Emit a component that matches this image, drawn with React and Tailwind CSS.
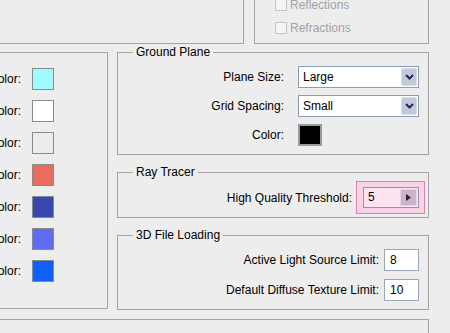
const swatches = ["#a0fbff", "#ffffff", "#ececec", "#e96c60", "#3b47b0", "#5e6cf5", "#0f5ff9"];

function Chevron() {
  return (
    <svg width="9" height="6" viewBox="0 0 9 6">
      <path d="M1 1l3.5 3.5L8 1" stroke="#1f2b57" strokeWidth="2" fill="none" />
    </svg>
  );
}

function Select({ value }) {
  return (
    <div className="flex h-[22px] w-[121px] border border-[#8a9cb4] bg-white">
      <span className="flex-1 pl-[4px] leading-[20px]">{value}</span>
      <span className="m-[1px] flex w-[16px] items-center justify-center rounded-[2px] border border-[#d6dbe6] bg-[#c3c9d8]">
        <Chevron />
      </span>
    </div>
  );
}

function Group({ title, children }) {
  return (
    <fieldset className="border border-[#a3a3a3]">
      <legend className="ml-[15px] px-[3px] leading-[15px]">{title}</legend>
      {children}
    </fieldset>
  );
}

function Check({ label }) {
  return (
    <div className="flex items-center gap-[3px] text-[#a2a2a2]">
      <span className="h-[12px] w-[12px] border border-[#c4c4c4] bg-[#f4f4f4]" />
      <span>{label}</span>
    </div>
  );
}

export default function App() {
  return (
    <div
      className="h-[333px] w-[450px] overflow-hidden bg-[#ededed] text-[12px] leading-[14px] text-black"
      style={{ fontFamily: '"Liberation Sans", Arial, sans-serif' }}
    >
      {/* top row */}
      <div className="flex h-[44px] gap-[10px]">
        <div className="-ml-[20px] w-[264px] border-r border-b border-[#a3a3a3]" />
        <div className="flex w-[175px] flex-col justify-end gap-[9px] border-x border-b border-[#a3a3a3] pb-[8px] pl-[20px]">
          <Check label="Reflections" />
          <Check label="Refractions" />
        </div>
      </div>

      {/* middle row */}
      <div className="mt-[1px] flex items-start gap-[9px]">
        <div className="-ml-[60px] mt-[7px] flex w-[168px] flex-col gap-[10px] border-y border-r border-[#a3a3a3] pt-[15px] pb-[26px]">
          {swatches.map((c) => (
            <div key={c} className="flex items-center justify-end gap-[11px] pr-[53px]">
              <span>Color:</span>
              <span className="h-[22px] w-[22px] border border-[#8a8a8a]" style={{ backgroundColor: c }} />
            </div>
          ))}
        </div>

        <div className="flex w-[312px] flex-col gap-[10px]">
          <Group title="Ground Plane">
            <div className="grid grid-cols-[1fr_121px] items-center gap-x-[14px] gap-y-[7px] pt-[6px] pr-[9px] pb-[8px]">
              <span className="text-right">Plane Size:</span>
              <Select value="Large" />
              <span className="text-right">Grid Spacing:</span>
              <Select value="Small" />
              <span className="text-right">Color:</span>
              <span className="h-[22px] w-[24px] border-2 border-[#9a9a9a] bg-black" />
            </div>
          </Group>

          <Group title="Ray Tracer">
            <div className="flex items-center justify-end gap-[4px] pt-[1px] pr-[3px] pb-[3px]">
              <span>High Quality Threshold:</span>
              <div className="border border-[#e07fb2] bg-[#f9d3e6] py-[5px] pr-[5px] pl-[6px]">
                <div className="flex h-[21px] w-[56px] border border-[#9d8fa4] bg-[#fde2f0]">
                  <span className="flex-1 pl-[4px] leading-[19px]">5</span>
                  <span className="m-[1px] flex w-[17px] items-center justify-center border border-[#e4d4e4] bg-[#c9b5c9]">
                    <svg width="5" height="7" viewBox="0 0 5 7">
                      <path d="M0 0l5 3.5L0 7z" fill="#2b1f3a" />
                    </svg>
                  </span>
                </div>
              </div>
            </div>
          </Group>

          <Group title="3D File Loading">
            <div className="flex flex-col gap-[8px] pt-[6px] pr-[9px] pb-[8px]">
              {[
                ["Active Light Source Limit:", "8"],
                ["Default Diffuse Texture Limit:", "10"],
              ].map(([label, v]) => (
                <div key={label} className="flex items-center justify-end gap-[5px]">
                  <span>{label}</span>
                  <span className="h-[22px] w-[35px] border border-[#9aa6b8] bg-white pl-[5px] leading-[20px]">{v}</span>
                </div>
              ))}
            </div>
          </Group>
        </div>
      </div>

      {/* bottom row */}
      <div className="-ml-[20px] mt-[9px] h-[20px] w-[449px] border-t border-r border-[#a3a3a3]" />
    </div>
  );
}
